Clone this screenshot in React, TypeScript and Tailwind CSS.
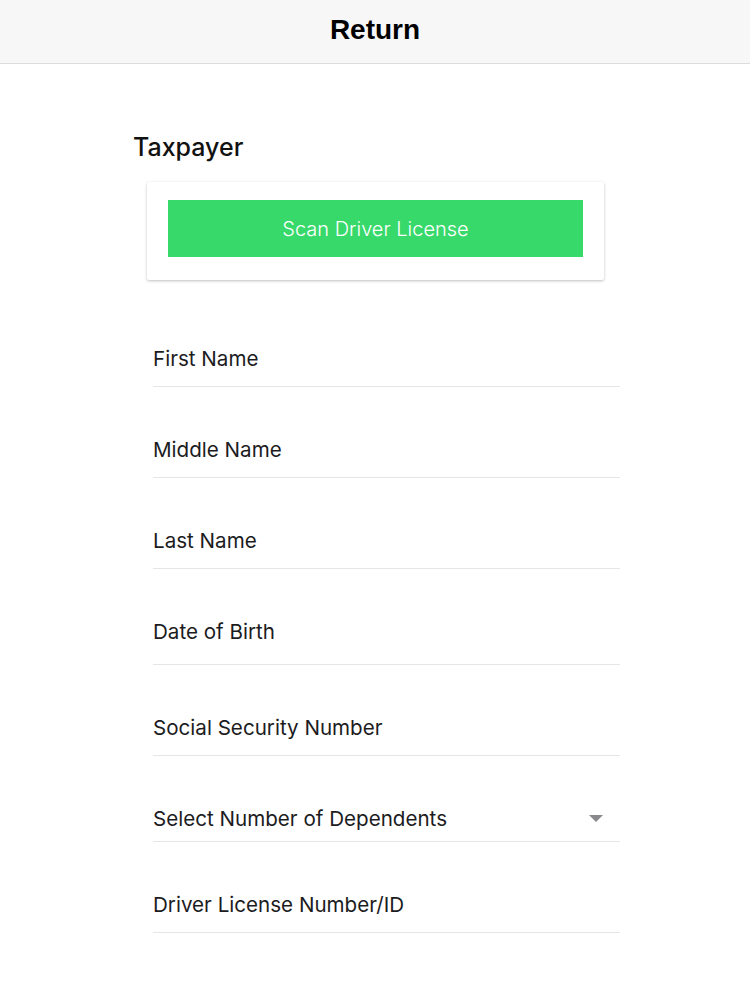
import React from "react";

const fields: { label: string; pb: string; caret?: boolean }[] = [
  { label: "First Name", pb: "pb-[15px]" },
  { label: "Middle Name", pb: "pb-[15px]" },
  { label: "Last Name", pb: "pb-[15px]" },
  { label: "Date of Birth", pb: "pb-[20px]" },
  { label: "Social Security Number", pb: "pb-[15px]" },
  { label: "Select Number of Dependents", pb: "pb-[10px]", caret: true },
  { label: "Driver License Number/ID", pb: "pb-[15px]" },
];

export default function App() {
  return (
    <div className="min-h-[1000px] w-[750px] bg-white" style={{ fontFamily: "Inter, 'Noto Sans', sans-serif" }}>
      <header className="flex h-[64px] items-center justify-center border-b border-[#dcdcde] bg-[#f7f7f8] pb-[3px]">
        <h1 className="text-[28px] font-bold text-black" style={{ fontFamily: "'Liberation Sans', Arial, sans-serif" }}>
          Return
        </h1>
      </header>
      <main className="ml-[133px] w-[487px] pt-[67px]">
        <h2 className="text-[25px] leading-[32px] font-medium text-[#111]">Taxpayer</h2>
        <div className="ml-[14px] mt-[19px] w-[457px] rounded-[2px] bg-white px-[21px] pt-[18px] pb-[23px] shadow-[0_1px_3px_rgba(0,0,0,0.25)]">
          <button className="flex h-[57px] w-full items-center justify-center bg-[#37d96b] text-[20px] font-light text-white">
            Scan Driver License
          </button>
        </div>
        <div className="ml-[20px] mt-[16px] flex w-[467px] flex-col">
          {fields.map((f) => (
            <div key={f.label} className={`flex items-center justify-between border-b border-[#e6e6e8] pt-[51px] ${f.pb}`}>
              <span className="text-[20.6px] leading-[24px] text-[#1c1c1e]">{f.label}</span>
              {f.caret && (
                <svg width="14" height="8" viewBox="0 0 14 8" className="mr-[17px]">
                  <path d="M0 0 L14 0 L7 7 Z" fill="#8a8a8e" />
                </svg>
              )}
            </div>
          ))}
        </div>
      </main>
    </div>
  );
}
